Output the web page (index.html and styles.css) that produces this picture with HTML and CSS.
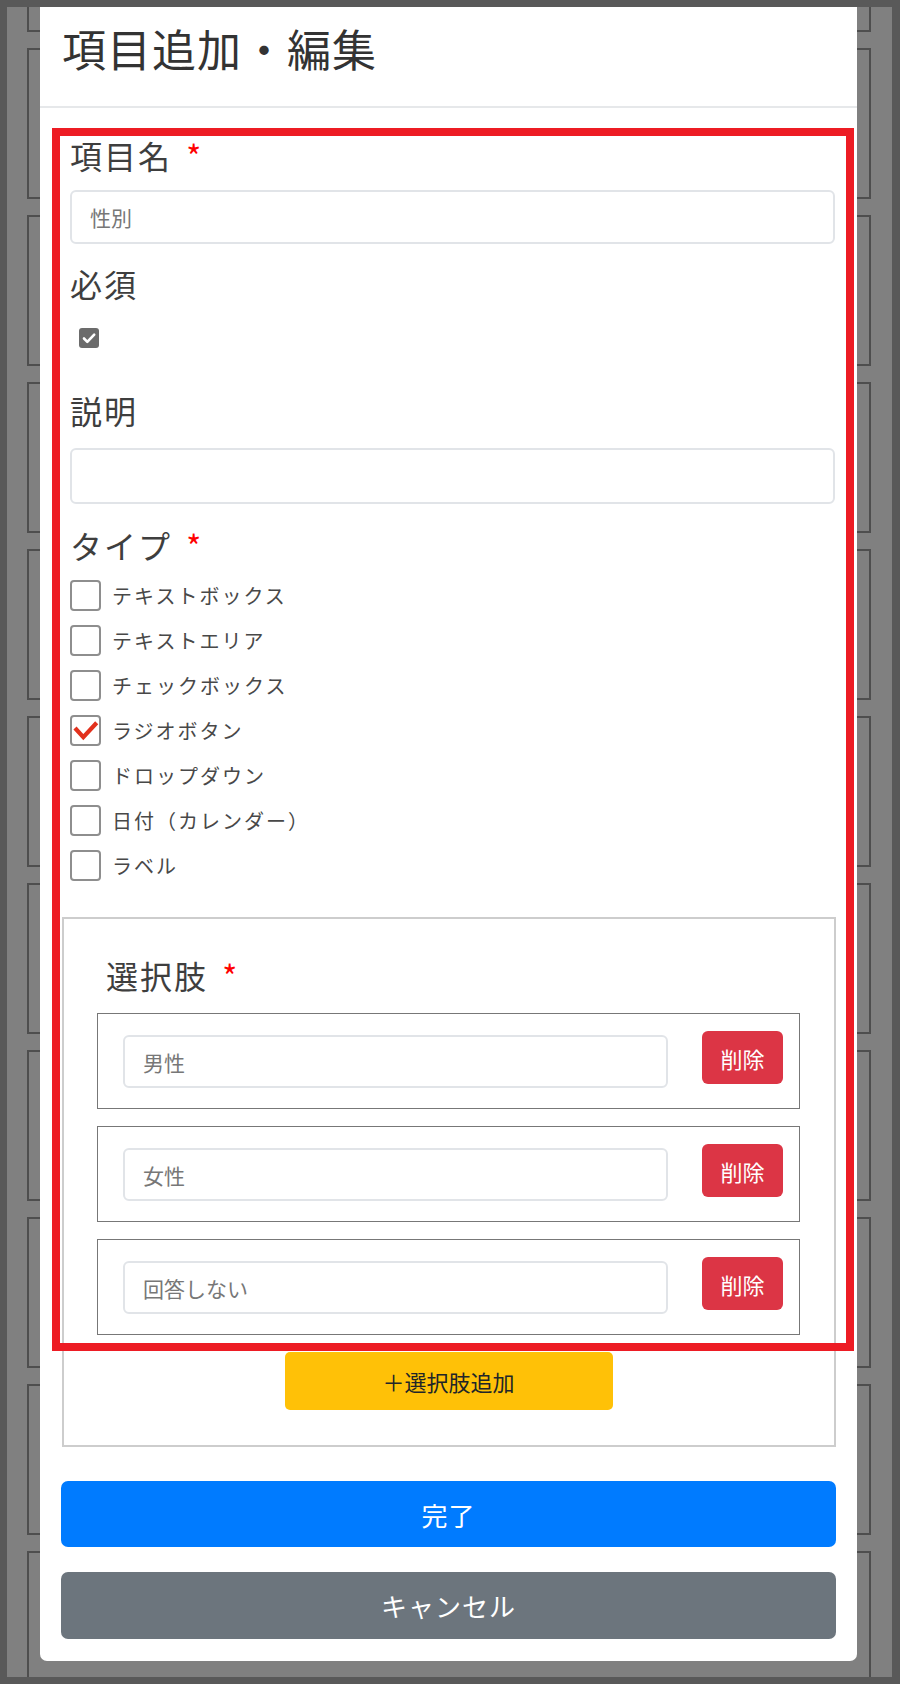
FILE: index.html
```html
<!DOCTYPE html>
<html>

<head>
  <title>項目追加・編集</title>
  <link rel="stylesheet" href="styles.css">
</head>

<body>
  <div class="screen">
    <div class="backdrop">
      <div class="back-card"></div>
      <div class="back-card"></div>
      <div class="back-card"></div>
      <div class="back-card"></div>
      <div class="back-card"></div>
      <div class="back-card"></div>
      <div class="back-card"></div>
      <div class="back-card"></div>
      <div class="back-card"></div>
      <div class="back-card"></div>
      <div class="back-card"></div>
    </div>

    <div class="modal">
      <div class="modal-header">
        <h1 class="modal-title">項目追加・編集</h1>
      </div>

      <div class="modal-body">
        <div class="form-top">
          <label class="field-label">項目名 <span class="required">*</span></label>
          <input class="text-input" type="text" placeholder="性別">

          <label class="field-label label-gap">必須</label>
          <div class="req-row">
            <span class="req-check">
              <svg viewBox="0 0 20 20" width="20" height="20">
                <path d="M5 10.5l3.3 3.3L15.2 6.6" stroke="#fff" stroke-width="2.6" fill="none" stroke-linecap="round" stroke-linejoin="round" />
              </svg>
            </span>
          </div>

          <label class="field-label desc-label">説明</label>
          <input class="text-input desc-input" type="text">

          <label class="field-label type-label">タイプ <span class="required">*</span></label>
          <div class="type-list">
            <div class="type-item"><span class="type-box"></span><span>テキストボックス</span></div>
            <div class="type-item"><span class="type-box"></span><span>テキストエリア</span></div>
            <div class="type-item"><span class="type-box"></span><span>チェックボックス</span></div>
            <div class="type-item">
              <span class="type-box">
                <svg viewBox="0 0 27 27" width="27" height="27">
                  <path d="M3 11l8.3 9.2L24.7 5.7" stroke="#e2311d" stroke-width="4.2" fill="none" stroke-linejoin="miter" />
                </svg>
              </span>
              <span>ラジオボタン</span>
            </div>
            <div class="type-item"><span class="type-box"></span><span>ドロップダウン</span></div>
            <div class="type-item"><span class="type-box"></span><span>日付（カレンダー）</span></div>
            <div class="type-item"><span class="type-box"></span><span>ラベル</span></div>
          </div>
        </div>

        <div class="options-box">
          <label class="field-label options-label">選択肢 <span class="required">*</span></label>

          <div class="option-row">
            <input class="text-input option-input" type="text" placeholder="男性">
            <button class="btn-delete">削除</button>
          </div>
          <div class="option-row">
            <input class="text-input option-input" type="text" placeholder="女性">
            <button class="btn-delete">削除</button>
          </div>
          <div class="option-row">
            <input class="text-input option-input" type="text" placeholder="回答しない">
            <button class="btn-delete">削除</button>
          </div>

          <button class="btn-add">＋選択肢追加</button>
        </div>

        <button class="btn-block btn-done">完了</button>
        <button class="btn-block btn-cancel">キャンセル</button>
      </div>

      <div class="highlight"></div>
    </div>
  </div>
</body>

</html>
```

FILE: styles.css
```css
* {
  box-sizing: border-box;
}

body {
  margin: 0;
  background-color: #595959;
  padding: 7px 8px 7px 7px;
  font-family: "Noto Sans CJK JP", "Noto Sans", sans-serif;
  color: #333;
}

.screen {
  display: grid;
  height: 1670px;
  background-color: #808080;
  overflow: hidden;
}

.backdrop,
.modal {
  grid-area: 1 / 1;
}

/* dimmed page behind the modal */
.backdrop {
  display: flex;
  flex-direction: column;
  gap: 16px;
  margin-top: -126px;
  padding-left: 20px;
}

.back-card {
  flex: none;
  width: 844px;
  height: 151px;
  border: 2px solid #4e4e4e;
  background-color: #808080;
}

.modal {
  position: relative;
  align-self: start;
  width: 817px;
  margin-left: 33px;
  background-color: #fff;
  border-radius: 0 0 7px 7px;
}

.modal-header {
  padding: 19px 22px 0 22px;
  height: 101px;
  border-bottom: 2px solid #e6e8ea;
}

.modal-title {
  margin: 0;
  font-size: 44px;
  line-height: 44px;
  font-weight: 400;
  letter-spacing: 1px;
  color: #333;
}

.modal-body {
  padding: 27px 21px 22px 21px;
}

.form-top {
  padding: 0 1px 0 9px;
}

.field-label {
  display: block;
  font-size: 32px;
  line-height: 40px;
  letter-spacing: 2px;
  color: #3e3e3e;
  margin-bottom: 15px;
}

.label-gap {
  margin-top: 19px;
}

.desc-label {
  margin-bottom: 18px;
}

.type-label {
  margin-top: 21px;
}

.required {
  margin-left: 5px;
  color: #f00;
}

.text-input {
  display: block;
  width: 100%;
  height: 54px;
  padding: 0 18px;
  border: 2px solid #e1e4e8;
  border-radius: 6px;
  font-family: inherit;
  font-size: 21px;
  color: #333;
  background-color: #fff;
}

.text-input::placeholder {
  color: #777;
}

.desc-input {
  height: 56px;
}

.req-row {
  padding: 10px 0 42px 9px;
}

.req-check {
  display: block;
  width: 20px;
  height: 20px;
  border-radius: 3px;
  background-color: #6b6b6b;
}

.req-check svg {
  display: block;
}

.type-list {
  display: flex;
  flex-direction: column;
  gap: 14px;
  margin-top: 7px;
}

.type-item {
  display: flex;
  align-items: center;
  gap: 11px;
  height: 31px;
  font-size: 20px;
  letter-spacing: 2px;
  color: #484848;
}

.type-box {
  flex: none;
  width: 31px;
  height: 31px;
  border: 2px solid #8e8e8e;
  border-radius: 4px;
  background-color: #fff;
}

.type-box svg {
  display: block;
}

.options-box {
  margin: 36px 0 0 1px;
  padding: 36px 34px 35px 33px;
  border: 2px solid #cdcdcd;
}

.options-label {
  margin: 0 0 18px 9px;
}

.option-row {
  display: flex;
  align-items: flex-start;
  gap: 34px;
  padding: 17px 16px 20px 25px;
  border: 1px solid #777;
  margin-bottom: 17px;
}

.option-input {
  flex: 1;
  height: 53px;
  margin-top: 4px;
}

.btn-delete {
  flex: none;
  width: 81px;
  height: 53px;
  border: none;
  border-radius: 6px;
  background-color: #dc3545;
  color: #fff;
  font-family: inherit;
  font-size: 22px;
}

.btn-add {
  display: block;
  width: 328px;
  height: 58px;
  margin: 0 auto;
  border: none;
  border-radius: 5px;
  background-color: #ffc107;
  color: #212529;
  font-family: inherit;
  font-size: 22px;
}

.btn-block {
  display: block;
  width: 100%;
  border: none;
  border-radius: 7px;
  color: #fff;
  font-family: inherit;
  font-size: 26px;
  letter-spacing: 1px;
}

.btn-done {
  height: 66px;
  margin-top: 34px;
  background-color: #007bff;
}

.btn-cancel {
  height: 67px;
  margin-top: 25px;
  background-color: #6c757d;
}

/* red annotation frame drawn over the form */
.highlight {
  position: absolute;
  left: 12px;
  top: 121px;
  width: 802px;
  height: 1223px;
  border: 8px solid #ed1c24;
  pointer-events: none;
}
```
